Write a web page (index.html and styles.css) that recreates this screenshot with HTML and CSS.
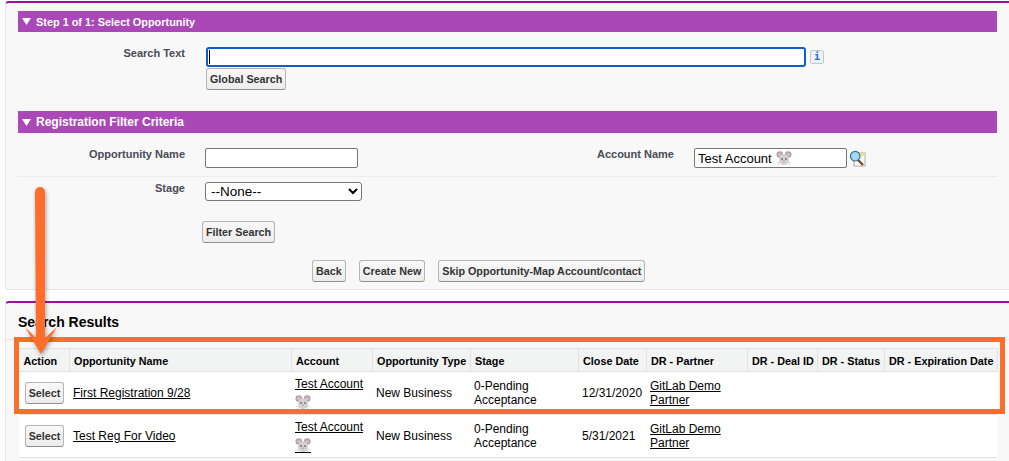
FILE: index.html

```html
<!DOCTYPE html>
<html lang="en">
<head>
  <meta charset="UTF-8">
  <title>Select Opportunity</title>
  <link rel="stylesheet" href="styles.css">
</head>
<body>
  <svg width="0" height="0" class="defs">
    <symbol id="mouse" viewBox="0 0 16 16">
      <circle cx="3.8" cy="4.6" r="3.3" fill="#a9a2a2"/>
      <circle cx="12.2" cy="4.6" r="3.3" fill="#a9a2a2"/>
      <circle cx="3.8" cy="4.6" r="2" fill="#d8b9bb"/>
      <circle cx="12.2" cy="4.6" r="2" fill="#d8b9bb"/>
      <path d="M1 13l3-1M15 13l-3-1M2 15l3-2M14 15l-3-2" stroke="#c4c0c0" stroke-width=".6"/>
      <ellipse cx="8" cy="9.6" rx="5" ry="5.4" fill="#d6d1d1"/>
      <circle cx="6" cy="9" r=".8" fill="#333"/>
      <circle cx="10" cy="9" r=".8" fill="#333"/>
      <ellipse cx="8" cy="11.2" rx="1" ry=".8" fill="#c98f96"/>
    </symbol>
  </svg>

  <div class="panel panel-filter">
    <div class="section-bar">
      <svg class="twisty" width="9" height="7" viewBox="0 0 9 7"><polygon points="0,0 9,0 4.5,7" fill="#fff"/></svg>
      Step 1 of 1: Select Opportunity
    </div>

    <div class="search-row">
      <label class="field-label">Search Text</label>
      <div class="search-col">
        <div class="search-line">
          <input class="search-input" type="text">
          <span class="info-btn">i</span>
        </div>
        <button class="btn">Global Search</button>
      </div>
    </div>

    <div class="section-bar section-bar-tall">
      <svg class="twisty" width="9" height="7" viewBox="0 0 9 7"><polygon points="0,0 9,0 4.5,7" fill="#fff"/></svg>
      Registration Filter Criteria
    </div>

    <div class="filter-row filter-row-line">
      <label class="field-label">Opportunity Name</label>
      <input class="text-input" type="text">
      <label class="field-label field-label-wide">Account Name</label>
      <div class="account-input">Test Account <svg class="mouse-inline" width="16" height="16"><use href="#mouse"/></svg></div>
      <svg class="lookup" width="17" height="17" viewBox="0 0 17 17">
        <rect x="5" y="3" width="11" height="13" fill="#fff" stroke="#aaa"/>
        <rect x="9" y="3" width="7" height="3" fill="#fbd98a"/>
        <path d="M9 10l5 5" stroke="#7a4a1e" stroke-width="2.4"/>
        <circle cx="6.2" cy="6.2" r="4.8" fill="#a5d8ee" stroke="#2f6f94" stroke-width="1.2"/>
      </svg>
    </div>

    <div class="filter-row filter-row-stage">
      <label class="field-label">Stage</label>
      <select class="stage-select"><option>--None--</option></select>
    </div>

    <div class="filter-btn-row"><button class="btn">Filter Search</button></div>

    <div class="action-row">
      <button class="btn">Back</button>
      <button class="btn">Create New</button>
      <button class="btn">Skip Opportunity-Map Account/contact</button>
    </div>
  </div>

  <div class="panel panel-results">
    <h2 class="results-title">Search Results</h2>
    <table class="results">
      <colgroup>
        <col class="c1"><col class="c2"><col class="c3"><col class="c4"><col class="c5">
        <col class="c6"><col class="c7"><col class="c8"><col class="c9"><col class="c10">
      </colgroup>
      <thead>
        <tr>
          <th>Action</th><th>Opportunity Name</th><th>Account</th><th>Opportunity Type</th><th>Stage</th>
          <th>Close Date</th><th>DR - Partner</th><th>DR - Deal ID</th><th>DR - Status</th><th>DR - Expiration Date</th>
        </tr>
      </thead>
      <tbody>
        <tr>
          <td><button class="btn">Select</button></td>
          <td><a href="#">First Registration 9/28</a></td>
          <td><a href="#">Test Account</a> <span class="mouse-link"><svg width="16" height="16"><use href="#mouse"/></svg></span></td>
          <td>New Business</td>
          <td>0-Pending Acceptance</td>
          <td>12/31/2020</td>
          <td><a href="#">GitLab Demo Partner</a></td>
          <td></td><td></td><td></td>
        </tr>
        <tr>
          <td><button class="btn">Select</button></td>
          <td><a href="#">Test Reg For Video</a></td>
          <td><a href="#">Test Account</a> <span class="mouse-link"><svg width="16" height="16"><use href="#mouse"/></svg></span></td>
          <td>New Business</td>
          <td>0-Pending Acceptance</td>
          <td>5/31/2021</td>
          <td><a href="#">GitLab Demo Partner</a></td>
          <td></td><td></td><td></td>
        </tr>
      </tbody>
    </table>
  </div>

  <!-- annotation drawn over the screenshot -->
  <svg class="annotation" width="1009" height="461" viewBox="0 0 1009 461">
    <rect x="16.5" y="339.5" width="986" height="72" fill="none" stroke="#ff6d2a" stroke-width="5"/>
    <path class="arrow" d="M35 192a5 5 0 0 1 10 0V338L57 327L41 354L25 327L36 338Z" fill="#ff6d2a"/>
  </svg>
</body>
</html>
```

FILE: styles.css

```css
html, body {
  margin: 0;
  height: 461px;
  overflow: hidden;
}
body {
  position: relative;
  background: #fff;
  font-family: "Liberation Sans", Arial, sans-serif;
  font-size: 12px;
  color: #000;
}
.defs {
  position: absolute;
}
.panel {
  margin-left: 5px;
  background: #f8f8f8;
  border-left: 1px solid #e6e6e6;
  border-top: 2px solid #99109f;
  border-top-left-radius: 4px;
}
.panel-filter {
  box-sizing: border-box;
  margin-top: 1px;
  height: 289px;
  padding: 8px 12px 0;
  border-bottom: 1px solid #e6e6e6;
  border-bottom-left-radius: 4px;
}
.section-bar {
  display: flex;
  align-items: center;
  gap: 5px;
  height: 21px;
  padding-left: 4px;
  background: #aa48b8;
  color: #fff;
  font-weight: bold;
  font-size: 10.9px;
}
.section-bar-tall {
  height: 22px;
  font-size: 12px;
  margin-top: 21px;
}
.field-label {
  flex: none;
  width: 167px;
  text-align: right;
  font-weight: bold;
  font-size: 11px;
  color: #4a4a56;
}
.field-label-wide {
  width: 316px;
  margin-right: 20px;
}
.search-row {
  display: flex;
  margin-top: 15px;
}
.search-col {
  margin-left: 21px;
}
.search-line {
  display: flex;
  align-items: center;
  gap: 4px;
}
.search-input {
  box-sizing: border-box;
  width: 600px;
  height: 20px;
  margin: 0;
  border: 2px solid #0b5fcc;
  border-radius: 3px;
  background: #fff linear-gradient(#000, #000) no-repeat 1px 1px / 1px 14px;
}
.info-btn {
  box-sizing: border-box;
  width: 14px;
  height: 14px;
  border: 1px solid #c4c8cc;
  border-radius: 2px;
  background: #eef2f6;
  color: #1a6fd8;
  font-family: "DejaVu Sans Mono", monospace;
  font-size: 10px;
  font-weight: bold;
  line-height: 12px;
  text-align: center;
}
.btn {
  box-sizing: border-box;
  height: 22px;
  margin: 0;
  padding: 0 3px;
  border: 1px solid #b5b5b5;
  border-bottom-color: #8f8f8f;
  border-radius: 3px;
  background: linear-gradient(#f8f8f8, #ececec);
  color: #333;
  font-family: inherit;
  font-size: 10.75px;
  font-weight: bold;
  white-space: nowrap;
}
.search-col .btn {
  margin-top: 1px;
  display: block;
}
.filter-row {
  display: flex;
}
.filter-row-line {
  align-items: flex-start;
  height: 28px;
  margin-top: 15px;
  border-bottom: 1px solid #ececec;
}
.filter-row-stage {
  margin-top: 5px;
}
.text-input {
  box-sizing: border-box;
  width: 153px;
  height: 20px;
  margin: 0 0 0 20px;
  border: 1px solid #767676;
  border-radius: 2px;
  background: #fff;
}
.account-input {
  box-sizing: border-box;
  display: flex;
  align-items: center;
  gap: 4px;
  width: 153px;
  height: 20px;
  padding-left: 3px;
  border: 1px solid #767676;
  border-radius: 2px;
  background: #fff;
  font-size: 13px;
}
.lookup {
  margin: 2px 0 0 2px;
}
.stage-select {
  width: 157px;
  height: 19px;
  margin-left: 20px;
  padding: 0 0 0 1px;
  border: 1px solid #767676;
  border-radius: 3px;
  background-color: #fff;
  color: #000;
  font-family: inherit;
  font-size: 13.5px;
}
.filter-btn-row {
  margin: 20px 0 0 184px;
}
.action-row {
  display: flex;
  gap: 13px;
  margin: 17px 0 0 294px;
}
.panel-results {
  margin-top: 11px;
  height: 170px;
}
.results-title {
  height: 37px;
  margin: 0;
  padding: 11px 0 0 12px;
  box-sizing: border-box;
  border-bottom: 1px solid #e6e6e6;
  font-size: 14px;
  line-height: 17px;
}
.results {
  table-layout: fixed;
  width: 978px;
  margin: 8px 0 0 13px;
  border-collapse: collapse;
  background: #fff;
}
.c1 { width: 50px; }
.c2 { width: 222px; }
.c3 { width: 81px; }
.c4 { width: 98px; }
.c5 { width: 108px; }
.c6 { width: 68px; }
.c7 { width: 101px; }
.c8 { width: 70px; }
.c9 { width: 67px; }
.c10 { width: 113px; }
.results th {
  height: 23px;
  padding: 2px 0 0 4.5px;
  box-sizing: border-box;
  background: #f2f3f3;
  border: 1px solid #e0e3e5;
  border-left: 0;
  text-align: left;
  font-size: 10.8px;
  white-space: nowrap;
}
.results td {
  height: 43px;
  padding: 0 4px;
  box-sizing: border-box;
  border-bottom: 1px solid #e3e3e3;
  line-height: 14px;
}
.results td:first-child {
  padding-left: 6px;
}
.results a {
  color: #000;
}
.results .btn {
  width: 39px;
  padding: 0;
}
.mouse-link {
  display: inline-block;
  height: 15px;
  margin-top: 3px;
  border-bottom: 1px solid #000;
  vertical-align: top;
}
.annotation {
  position: absolute;
  left: 0;
  top: 0;
}
.arrow {
  filter: drop-shadow(1px 2px 2px rgba(0, 0, 0, 0.35));
}
```
